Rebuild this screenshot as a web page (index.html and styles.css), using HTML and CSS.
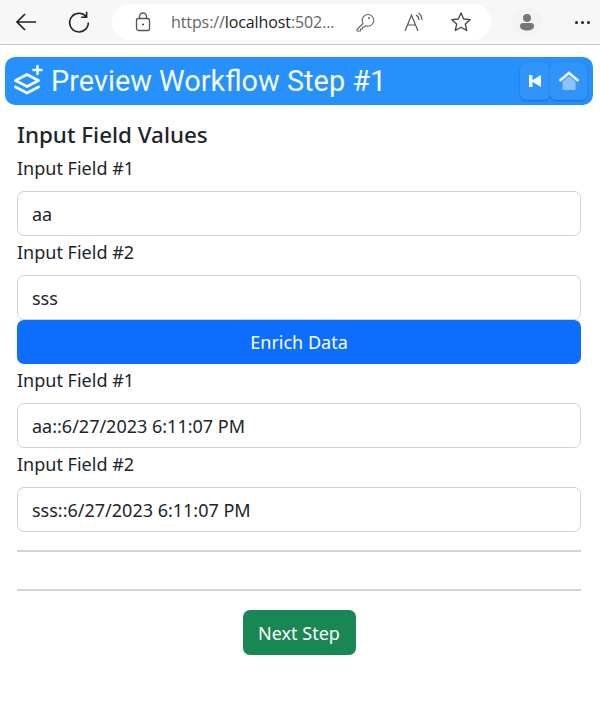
FILE: index.html
```html
<!DOCTYPE html>
<html lang="en">
<head>
<meta charset="utf-8">
<title>Preview Workflow Step #1</title>
<link rel="stylesheet" href="styles.css">
</head>
<body>
<header class="browser">
  <svg class="icon back" width="24" height="24" viewBox="0 0 24 24"><path d="M22 12H3M11 4l-8 8 8 8" fill="none" stroke="#222" stroke-width="1.7"/></svg>
  <svg class="icon reload" width="24" height="24" viewBox="0 0 24 24"><path d="M19 6.500A9.300 9.300 0 1 0 21.300 12.500M19.600 1.800v5.400h-5.400" fill="none" stroke="#222" stroke-width="1.6"/></svg>
  <div class="omnibox">
    <svg class="lock" width="16" height="20" viewBox="0 0 16 20"><rect x="1.500" y="6.500" width="13" height="12" rx="2" fill="none" stroke="#555" stroke-width="1.3"/><path d="M4.500 6.500V4.500a3.500 3.500 0 0 1 7 0v2" fill="none" stroke="#555" stroke-width="1.3"/><circle cx="8" cy="12.500" r="1.100" fill="#555"/></svg>
    <span class="url"><span class="url-dim">https://</span>localhost<span class="url-dim">:502...</span></span>
    <svg class="tool key" width="20" height="20" viewBox="0 0 20 20"><path d="M8 11.500L2 17.500V19h3.500v-2H7.500v-2h2l1.200-1.300A5.800 5.800 0 1 0 7.300 9.500z" fill="none" stroke="#666" stroke-width="1.1" stroke-linejoin="round"/><circle cx="14" cy="6" r="1" fill="#666"/></svg>
    <svg class="tool read" width="24" height="20" viewBox="0 0 24 20"><path d="M2 19L8.500 3 15 19M4.500 13h8" fill="none" stroke="#555" stroke-width="1.2"/><path d="M13 3a6 6 0 0 1 3 5M15.500 1a9 9 0 0 1 3.500 7" fill="none" stroke="#555" stroke-width="1.1"/></svg>
    <svg class="tool star" width="22" height="22" viewBox="0 0 22 22"><path d="M11 2l2.700 6 6.500.7-4.900 4.300 1.400 6.500L11 16.200 5.300 19.500l1.400-6.500L1.800 8.700 8.300 8z" fill="none" stroke="#444" stroke-width="1.300" stroke-linejoin="round"/></svg>
  </div>
  <div class="avatar">
    <svg width="16" height="18" viewBox="0 0 16 18"><circle cx="8" cy="5" r="4" fill="#777"/><path d="M1 13a3 3 0 0 1 3-3h8a3 3 0 0 1 3 3c0 3-3 4.500-7 4.500S1 16 1 13z" fill="#777"/></svg>
  </div>
  <span class="more"><i></i><i></i><i></i></span>
</header>

<div class="banner">
  <svg class="stack" width="33" height="32" viewBox="0 0 33 32"><path d="M16 10.500L4.500 16.500l11.500 6 11.500-6z" fill="none" stroke="#eef7ff" stroke-width="3" stroke-linejoin="round"/><path d="M4.500 23l11.500 6 11.500-6" fill="none" stroke="#eef7ff" stroke-width="3" stroke-linecap="round" stroke-linejoin="round"/><path d="M26.500 2v8M22.500 6h8" stroke="#eef7ff" stroke-width="2.600" stroke-linecap="round"/></svg>
  <h1 class="banner-title">Preview Workflow Step #1</h1>
  <div class="banner-actions">
    <button class="tool-btn first" type="button" aria-label="First">
      <svg width="12" height="14" viewBox="0 0 12 14"><rect x="0" y="1" width="3.500" height="12" fill="#f2f9ff"/><path d="M12 1v12L2 7z" fill="#f2f9ff"/></svg>
    </button>
    <button class="tool-btn home" type="button" aria-label="Home">
      <svg width="22" height="20" viewBox="0 0 22 20"><path d="M4.500 10.500L11 5l6.500 5.500V18a1 1 0 0 1-1 1h-11a1 1 0 0 1-1-1z" fill="#8fc2fb"/><path d="M1.500 10L11 2l9.500 8" fill="none" stroke="#eef7ff" stroke-width="2.600"/></svg>
    </button>
  </div>
</div>

<main class="content">
  <h2 class="section-title">Input Field Values</h2>
  <label class="field-label">Input Field #1</label>
  <div class="field">aa</div>
  <label class="field-label">Input Field #2</label>
  <div class="field">sss</div>
  <button class="enrich" type="button">Enrich Data</button>
  <label class="field-label">Input Field #1</label>
  <div class="field">aa::6/27/2023 6:11:07 PM</div>
  <label class="field-label">Input Field #2</label>
  <div class="field">sss::6/27/2023 6:11:07 PM</div>
  <hr class="rule rule-first">
  <hr class="rule rule-second">
  <div class="next-row"><button class="next" type="button">Next Step</button></div>
</main>
</body>
</html>
```

FILE: styles.css
```css
* { box-sizing: border-box; }
html, body { margin: 0; padding: 0; }
body {
  width: 600px;
  height: 706px;
  overflow: hidden;
  background: #fff;
  color: #212529;
  font-family: "Noto Sans", "Open Sans", sans-serif;
}
.browser {
  height: 45px;
  background: #f7f7f7;
  border-bottom: 1px solid #c9c9c9;
  display: flex;
  align-items: center;
}
.icon { flex: none; }
.back { margin-left: 14px; }
.reload { margin-left: 29px; }
.omnibox {
  margin-left: 21px;
  width: 379px;
  height: 36px;
  background: #fff;
  border-radius: 18px;
  display: flex;
  align-items: center;
  padding-left: 23px;
}
.lock { flex: none; }
.url {
  margin-left: 20px;
  width: 164px;
  font-size: 16px;
  white-space: nowrap;
  color: #222;
  font-family: "Open Sans", "Noto Sans", sans-serif;
  letter-spacing: -.1px;
}
.url-dim { color: #666; }
.tool { flex: none; }
.key { margin-left: 20px; }
.read { margin-left: 28px; }
.star { margin-left: 23px; }
.avatar {
  margin-left: 21px;
  width: 30px;
  height: 30px;
  border-radius: 50%;
  background: #f3f3f3;
  display: flex;
  align-items: center;
  justify-content: center;
}
.more {
  margin-left: 33px;
  display: flex;
  gap: 3px;
}
.more i {
  width: 3px;
  height: 3px;
  border-radius: 50%;
  background: #222;
}
.banner {
  margin: 12px 7px 0 5px;
  height: 48px;
  background: #2690fb;
  border-radius: 10px;
  display: flex;
  align-items: center;
  padding: 0 6px;
}
.stack { flex: none; margin-top: -2px; }
.banner-title {
  margin: 0 0 0 7px;
  flex: 1;
  font-family: Roboto, sans-serif;
  font-weight: 400;
  font-size: 28.900px;
  line-height: 48px;
  color: #f2f9ff;
  white-space: nowrap;
}
.banner-actions { display: flex; }
.tool-btn {
  height: 37px;
  padding: 0;
  border: 0;
  border-radius: 6px;
  background: #3194f9;
  box-shadow: 0 1px 2px rgba(0, 60, 140, .4);
  display: flex;
  align-items: center;
  justify-content: center;
}
.first { width: 30px; }
.home { width: 37px; }
.content {
  padding: 14px 19px 0 17px;
}
.section-title {
  margin: 0;
  font-size: 22.400px;
  font-weight: 500;
  line-height: 32px;
  color: #212529;
}
.field-label {
  display: block;
  font-size: 18px;
  line-height: 30px;
  padding-top: 1px;
  margin-bottom: 8px;
  color: #212529;
}
.section-title + .field-label { padding-top: 2px; }
.field {
  height: 45px;
  border: 1px solid #ced4da;
  border-radius: 7px;
  padding: 0 14px;
  font-size: 18px;
  line-height: 45px;
  color: #212529;
  background: #fff;
}
.enrich {
  display: block;
  width: 100%;
  height: 44px;
  margin: 0;
  border: 0;
  border-radius: 7px;
  background: #0d6efd;
  color: #fff;
  font: inherit;
  font-size: 18px;
}
.rule {
  margin: 0;
  border: 0;
  border-top: 2px solid #d4d4d4;
}
.rule-first { margin-top: 18px; }
.rule-second { margin-top: 37px; }
.next-row {
  display: flex;
  justify-content: center;
  margin-top: 19px;
}
.next {
  width: 113px;
  height: 45px;
  padding: 0;
  border: 0;
  border-radius: 7px;
  background: #198754;
  color: #fff;
  font: inherit;
  font-size: 18px;
}
```
